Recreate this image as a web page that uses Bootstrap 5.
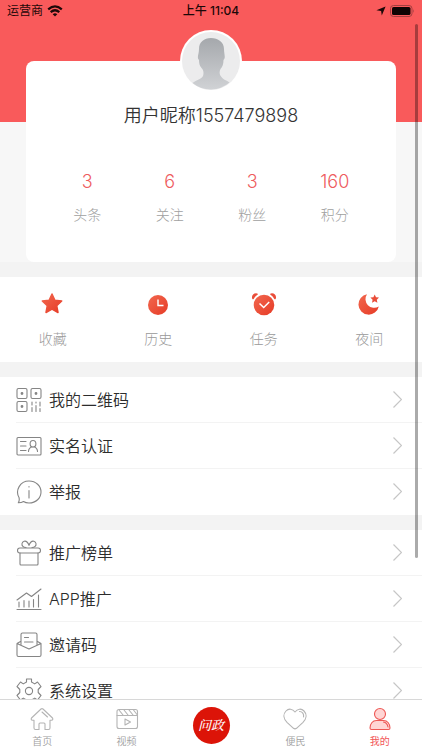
<!DOCTYPE html>
<html lang="zh-CN">
<head>
<meta charset="utf-8">
<meta name="viewport" content="width=device-width, initial-scale=1">
<title>我的</title>
<link href="https://cdn.jsdelivr.net/npm/bootstrap@5.3.0/dist/css/bootstrap.min.css" rel="stylesheet">
<style>
body{font-family:Inter,"Noto Sans CJK SC",sans-serif;color:#333;background:#f3f3f3;font-weight:300}
svg{display:block;flex:none}
.hero{background:linear-gradient(#f95a5b 122px,#f7f7f7 0)}
.status{height:22px;padding:0 7px;font-size:12px;color:#1c0808;font-weight:400;line-height:22px}
.clock{font-weight:500}
.profile{margin:39px 26px 0;border-radius:8px;height:201px}
.avatar{width:62px;height:62px;margin-top:-31px}
.user-name{font-size:18px;line-height:24px;margin:12px 0 0;font-weight:350}
.stats{padding:0 20px;margin-top:42px}
.stat-num{font-size:18px;line-height:24px;color:#ee5b5e;font-weight:350}
.stat-label{font-size:14px;line-height:20px;margin-top:11px;color:#a0a0a0}
.actions{height:85px;margin-top:15px;padding-top:14px}
.actions a{color:#999;font-size:14px;line-height:20px}
.actions svg{margin-bottom:12px}
.menu{margin-top:15px}
.menu a{color:#2c2c2c;font-size:16px;line-height:24px;padding-left:16px;font-weight:350}
.menu a .menu-row{height:46px;gap:7px;padding-right:20px;border-bottom:1px solid #f3f3f3}
.menu a:last-child .menu-row{border-bottom-color:#fff}
.line{fill:none;stroke:#858585;stroke-width:1.1;stroke-linecap:round;stroke-linejoin:round}
.tabs{height:51px;border-top:1px solid #d8d8d8}
.tabs a{font-size:10px;line-height:14px;color:#a0a0a0;padding-top:7px;font-weight:350}
.tabs svg{margin-bottom:3px}
.tabs .line{stroke:#b4b4b4}
.tabs a.current{color:#f25556;font-weight:400}
.tabs .current .line{stroke:#ee5754;fill:#ffd5d4}
.logo{width:37px;height:37px;background:#dc1408;color:#fff;font:italic 500 13px/36px "Noto Serif CJK SC","Noto Sans CJK SC",serif}
.scroll-thumb{right:4px;top:24px;width:3px;height:534px;background:rgba(0,0,0,.33)}
</style>
<script src="https://cdn.jsdelivr.net/npm/bootstrap@5.3.0/dist/js/bootstrap.bundle.min.js"></script>
</head>
<body>
<svg width="0" height="0" class="position-absolute" aria-hidden="true"><defs>
<linearGradient id="red" x1="0" y1="0" x2="1" y2="1"><stop stop-color="#f2684f"/><stop offset="1" stop-color="#e63b26"/></linearGradient>
<linearGradient id="shade" x1="0" y1="0" x2="0" y2="1"><stop stop-color="#a5a8ac"/><stop offset="1" stop-color="#d0d2d5"/></linearGradient>
</defs></svg>
<div class="d-flex flex-column vh-100 overflow-hidden position-relative">
<main class="flex-grow-1 overflow-hidden">
  <header class="hero">
    <div class="status d-flex align-items-center">
      <div class="col d-flex align-items-center gap-1"><span>运营商</span>
        <svg width="16" height="12" viewBox="0 0 16 12" fill="none" stroke="#1c0808" stroke-width="2.2"><path d="M1.2 4.4Q8-1.5 14.8 4.4M3.7 7.1Q8 3.4 12.3 7.1"/><path d="M8 11.5 5.7 9.2Q8 7.2 10.3 9.2Z" fill="#1c0808" stroke="none"/></svg>
      </div>
      <div class="clock">上午 11:04</div>
      <div class="col d-flex align-items-center justify-content-end gap-1">
        <svg width="10" height="10" viewBox="0 0 10 10"><path d="M9.6.4 5.8 9.6 5.1 5 .4 4.3Z" fill="#1c0808"/></svg>
        <svg width="25" height="12" viewBox="0 0 25 12"><rect x=".5" y=".5" width="21.5" height="11" rx="3" fill="none" stroke="#a33f40"/><rect x="2" y="2" width="18.5" height="8" rx="1.6" fill="#100404"/><path d="M23.3 4Q24.8 6 23.3 8Z" fill="#a33f40"/></svg>
      </div>
    </div>
    <section class="profile bg-white d-flex flex-column align-items-center">
      <svg class="avatar" viewBox="0 0 62 62"><circle cx="31" cy="31" r="31" fill="#fff"/><circle cx="31" cy="31" r="29" fill="#ececed"/><path d="M12.5 53c4-3 9-4 10.500-7 1-3 .5-6-1.500-8-2-2-2.500-5-2.500-8C16.500 28 19 24 19 19c0-7 5-11 12-11s13 4 13 11c0 5 2 9-.5 11 0 4-1 7-3 9-1.500 3-1 6 1 8 2 3 5 3 8 5.500A29 29 0 0 1 12.500 53Z" fill="url(#shade)"/></svg>
      <h1 class="user-name">用户昵称1557479898</h1>
      <div class="stats row g-0 w-100 text-center">
        <div class="col"><div class="stat-num">3</div><div class="stat-label">头条</div></div>
        <div class="col"><div class="stat-num">6</div><div class="stat-label">关注</div></div>
        <div class="col"><div class="stat-num">3</div><div class="stat-label">粉丝</div></div>
        <div class="col"><div class="stat-num">160</div><div class="stat-label">积分</div></div>
      </div>
    </section>
  </header>
  <nav class="actions bg-white row g-0" aria-label="快捷入口">
    <a href="#" class="col d-flex flex-column align-items-center text-decoration-none"><svg width="26" height="26" viewBox="0 0 26 26"><path d="m12 3 2.900 6.200 6.800.8-5 4.700 1.300 6.800-6-3.400-6 3.400 1.300-6.800-5-4.700 6.800-.8Z" fill="url(#red)" stroke="url(#red)" stroke-width="1.500" stroke-linejoin="round"/></svg>收藏</a>
    <a href="#" class="col d-flex flex-column align-items-center text-decoration-none"><svg width="26" height="26" viewBox="0 0 26 26"><circle cx="13" cy="14" r="10" fill="url(#red)"/><path d="M13 8.500v6h5.500" fill="none" stroke="#fff" stroke-width="1.400"/></svg>历史</a>
    <a href="#" class="col d-flex flex-column align-items-center text-decoration-none"><svg width="26" height="26" viewBox="0 0 26 26"><circle cx="13" cy="14" r="10.300" fill="url(#red)"/><path d="M2 7.500A3.300 3.300 0 0 1 6 3.200Q3.600 4.800 2 7.500ZM24 7.500A3.300 3.300 0 0 0 20 3.200Q22.400 4.800 24 7.500Z" fill="#e94d39" stroke="#e94d39" stroke-width="1.600" stroke-linejoin="round"/><path d="m8.500 12.500 4.200 4 5.500-5.500" fill="none" stroke="#fff" stroke-width="1.500"/></svg>任务</a>
    <a href="#" class="col d-flex flex-column align-items-center text-decoration-none"><svg width="26" height="26" viewBox="0 0 26 26"><path d="M11 3.200A10.300 10.300 0 1 0 22.800 15.500 8.700 8.700 0 0 1 11 3.200Z" fill="url(#red)"/><path d="m18.700 3.500 1.300 2.700 3 .4-2.200 2.100.6 3-2.700-1.500-2.700 1.500.6-3-2.200-2.100 3-.4Z" fill="#e94d39"/></svg>夜间</a>
  </nav>
  <nav class="menu bg-white d-flex flex-column" aria-label="账户">
    <a href="#" class="text-decoration-none"><div class="menu-row d-flex align-items-center"><svg class="line" width="26" height="26" viewBox="0 0 26 26"><rect x="1" y="1.500" width="10" height="10" rx="1.500"/><rect x="15" y="1.500" width="10" height="10" rx="1.500"/><rect x="1" y="14.500" width="10" height="10" rx="1.500"/><path d="M16 15v3M16 20.500v4M20 15v1M20 18.500v6M24 15v4M24 21.500v3"/><path d="M6 6.400v.2M20 6.400v.2M6 19.400v.2" stroke-width="2.800"/></svg><span class="flex-grow-1">我的二维码</span><svg width="9" height="17" viewBox="0 0 9 17" fill="none" stroke="#c6c6c6" stroke-width="1.200"><path d="m.5.500 8 8-8 8"/></svg></div></a>
    <a href="#" class="text-decoration-none"><div class="menu-row d-flex align-items-center"><svg class="line" width="26" height="26" viewBox="0 0 26 26"><rect x="1" y="4.500" width="24" height="17.500" rx="1"/><path d="M4.500 8.500h5.500M4.500 13h5.500M4.500 17.500h5.500M12.500 18.500c0-3 1.500-4 3.300-4.800"/><ellipse cx="17" cy="10.800" rx="2.900" ry="3.300"/><path d="M18.200 13.700c1.800.8 3.300 1.800 3.300 4.800"/></svg><span class="flex-grow-1">实名认证</span><svg width="9" height="17" viewBox="0 0 9 17" fill="none" stroke="#c6c6c6" stroke-width="1.200"><path d="m.5.500 8 8-8 8"/></svg></div></a>
    <a href="#" class="text-decoration-none"><div class="menu-row d-flex align-items-center"><svg class="line" width="26" height="26" viewBox="0 0 26 26"><path d="M3 18.500C-1 11.500 4 2 13 2c7 0 12 5 12 11s-5 11-12 11c-2.500 0-4-.5-5.500-1.500-1.500 1-3.500 1.300-5.200 1.300.8-1.300 1.200-3.300.7-5.300ZM13 7.500v.4M13 11.500v7.500"/></svg><span class="flex-grow-1">举报</span><svg width="9" height="17" viewBox="0 0 9 17" fill="none" stroke="#c6c6c6" stroke-width="1.200"><path d="m.5.500 8 8-8 8"/></svg></div></a>
  </nav>
  <nav class="menu bg-white d-flex flex-column" aria-label="更多">
    <a href="#" class="text-decoration-none"><div class="menu-row d-flex align-items-center"><svg class="line" width="26" height="26" viewBox="0 0 26 26"><rect x="1.500" y="8" width="23" height="5" rx="2.400"/><path d="M4 13V24q0 1 1 1h16q1 0 1-1V13M10 7.500C7.500 7.500 5.500 6 6 3.500 6.500 1 9.500.5 11 2c1 1 1.700 2.200 2 3.500.3-1.300 1-2.500 2-3.500 1.500-1.500 4.500-1 5 1.500.5 2.500-1.500 4-4 4"/></svg><span class="flex-grow-1">推广榜单</span><svg width="9" height="17" viewBox="0 0 9 17" fill="none" stroke="#c6c6c6" stroke-width="1.200"><path d="m.5.500 8 8-8 8"/></svg></div></a>
    <a href="#" class="text-decoration-none"><div class="menu-row d-flex align-items-center"><svg class="line" width="26" height="26" viewBox="0 0 26 26"><path d="M1 23.500h24M3 16v5M8 14.500V21M13 15v6M17.500 13.500V21M22.500 9v12M1 14l9.500-7 5 3.500L25 3"/></svg><span class="flex-grow-1">APP推广</span><svg width="9" height="17" viewBox="0 0 9 17" fill="none" stroke="#c6c6c6" stroke-width="1.200"><path d="m.5.500 8 8-8 8"/></svg></div></a>
    <a href="#" class="text-decoration-none"><div class="menu-row d-flex align-items-center"><svg class="line" width="26" height="26" viewBox="0 0 26 26"><path d="M5 12.500V2.500Q5 1 6.500 1h13Q21 1 21 2.500v10M8.500 5.500h4M8.500 10h8.500M4.500 9.500 1 11.500V23q0 1.500 1.500 1.500h21Q25 24.500 25 23V11.500l-3.500-2M1 11.500l12 5.500 12-5.500"/></svg><span class="flex-grow-1">邀请码</span><svg width="9" height="17" viewBox="0 0 9 17" fill="none" stroke="#c6c6c6" stroke-width="1.200"><path d="m.5.500 8 8-8 8"/></svg></div></a>
    <a href="#" class="text-decoration-none"><div class="menu-row d-flex align-items-center"><svg class="line" width="26" height="26" viewBox="0 0 26 26"><circle cx="13" cy="13" r="3.600"/><path d="M10.500 1h5v3l3.200 1.900L21.500 4 25 8.500 22.200 11.500v3L25 17.500 21.500 22l-2.800-1.900L15.500 22v3h-5v-3l-3.200-1.900L4.500 22 1 17.500l2.800-3v-3L1 8.500 4.500 4l2.800 1.900L10.500 4Z"/></svg><span class="flex-grow-1">系统设置</span><svg width="9" height="17" viewBox="0 0 9 17" fill="none" stroke="#c6c6c6" stroke-width="1.200"><path d="m.5.500 8 8-8 8"/></svg></div></a>
  </nav>
</main>
<nav class="tabs bg-white row g-0 flex-shrink-0" aria-label="主导航">
  <a href="#" class="col d-flex flex-column align-items-center text-decoration-none"><svg class="line" width="24" height="24" viewBox="0 0 24 24"><path d="M11 2q1-.8 2 0l9.500 9q1 2-1 2.300H20V21q0 1.500-1.500 1.500H15V17q0-1-1-1h-4q-1 0-1 1v5.500H5.500Q4 22.500 4 21v-7.700H2.500q-2-.3-1-2.300ZM12 5l5.500 5"/></svg>首页</a>
  <a href="#" class="col d-flex flex-column align-items-center text-decoration-none"><svg class="line" width="24" height="24" viewBox="0 0 24 24"><rect x="2" y="2.500" width="20.500" height="19" rx="2"/><path d="M2 8.500h20.500M4 3l4 5M9 3l4 5M14 3l4 5M18.500 3l3.500 4.500M10 12v6l5.500-3Z"/></svg>视频</a>
  <a href="#" class="col d-flex flex-column align-items-center text-decoration-none" aria-label="问政"><span class="logo rounded-circle text-center">问政</span></a>
  <a href="#" class="col d-flex flex-column align-items-center text-decoration-none"><svg class="line" width="24" height="24" viewBox="0 0 24 24"><path d="M12 5C9.500 1.500 5.500 1.300 3 4-.3 7.500.7 12 4 15.300l6.500 6q1.500 1.200 3 0l6.500-6C23.300 12 24.300 7.500 21 4c-2.500-2.700-6.500-2.500-9 1ZM16.500 4.500c3 0 4.500 2.500 4 5.500"/></svg>便民</a>
  <a href="#" class="current col d-flex flex-column align-items-center text-decoration-none" aria-current="page"><svg class="line" width="24" height="24" viewBox="0 0 24 24"><circle cx="12" cy="7" r="5.500"/><path d="M8.500 13.500h7c4 0 6.500 3.500 6.500 7.500q0 1.500-1.500 1.500h-17Q2 22.500 2 21c0-4 2.500-7.500 6.500-7.500Z"/><path d="M15.500 15c3 .5 4 2.500 4.500 5" fill="none"/></svg>我的</a>
</nav>
<div class="scroll-thumb position-absolute rounded-pill"></div>
</div>
</body>
</html>
